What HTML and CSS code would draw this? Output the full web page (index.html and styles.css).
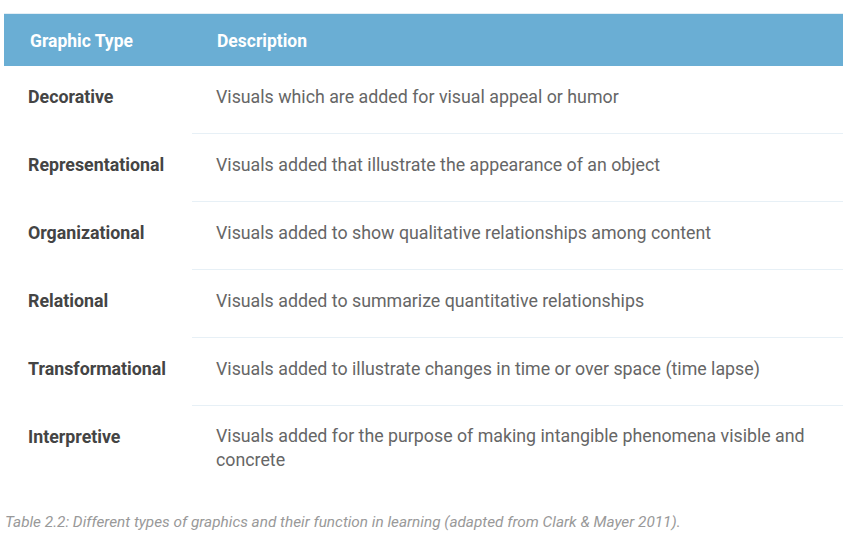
FILE: index.html
```html
<!DOCTYPE html>
<html>
<head>
<meta charset="utf-8">
<link rel="stylesheet" href="styles.css">
</head>
<body>
<div class="wrap">
  <table class="gt">
    <thead>
      <tr><th class="c1">Graphic Type</th><th class="c2">Description</th></tr>
    </thead>
    <tbody>
      <tr><td class="c1">Decorative</td><td class="c2">Visuals which are added for visual appeal or humor</td></tr>
      <tr><td class="c1">Representational</td><td class="c2">Visuals added that illustrate the appearance of an object</td></tr>
      <tr><td class="c1">Organizational</td><td class="c2">Visuals added to show qualitative relationships among content</td></tr>
      <tr><td class="c1">Relational</td><td class="c2">Visuals added to summarize quantitative relationships</td></tr>
      <tr><td class="c1">Transformational</td><td class="c2">Visuals added to illustrate changes in time or over space (time lapse)</td></tr>
      <tr class="last"><td class="c1">Interpretive</td><td class="c2">Visuals added for the purpose of making intangible phenomena visible and concrete</td></tr>
    </tbody>
  </table>
  <p class="caption">Table 2.2: Different types of graphics and their function in learning (adapted from Clark &amp; Mayer 2011).</p>
</div>
</body>
</html>
```

FILE: styles.css
```css
html, body { margin: 0; padding: 0; background: #fff; }
body { font-family: Roboto, "Liberation Sans", sans-serif; }
.wrap { padding: 13px 7px 0 4px; }
.gt { width: 100%; border-collapse: collapse; table-layout: fixed; }
.gt th, .gt td { text-align: left; vertical-align: top; padding: 18px 24px 24px; font-size: 17.8px; line-height: 25px; }
.gt thead th.c1 { width: 138px; }
.gt thead th { background: #6aaed4; color: #fff; font-weight: 700; font-size: 17.5px; padding: 15px 24px 12px 26px; border-top: 1px solid #e3eef5; }
.gt thead th.c2 { padding-left: 25px; }
.gt tbody td.c1 { font-weight: 700; color: #444; }
.gt tbody td.c2 { color: #666; border-bottom: 1px solid #e7f0f6; }
.gt tbody tr.last td.c2 { border-bottom: none; line-height: 24px; }
.caption { margin: 16px 0 0 1px; font-size: 15.35px; font-style: italic; color: #999; line-height: 20px; }
```
